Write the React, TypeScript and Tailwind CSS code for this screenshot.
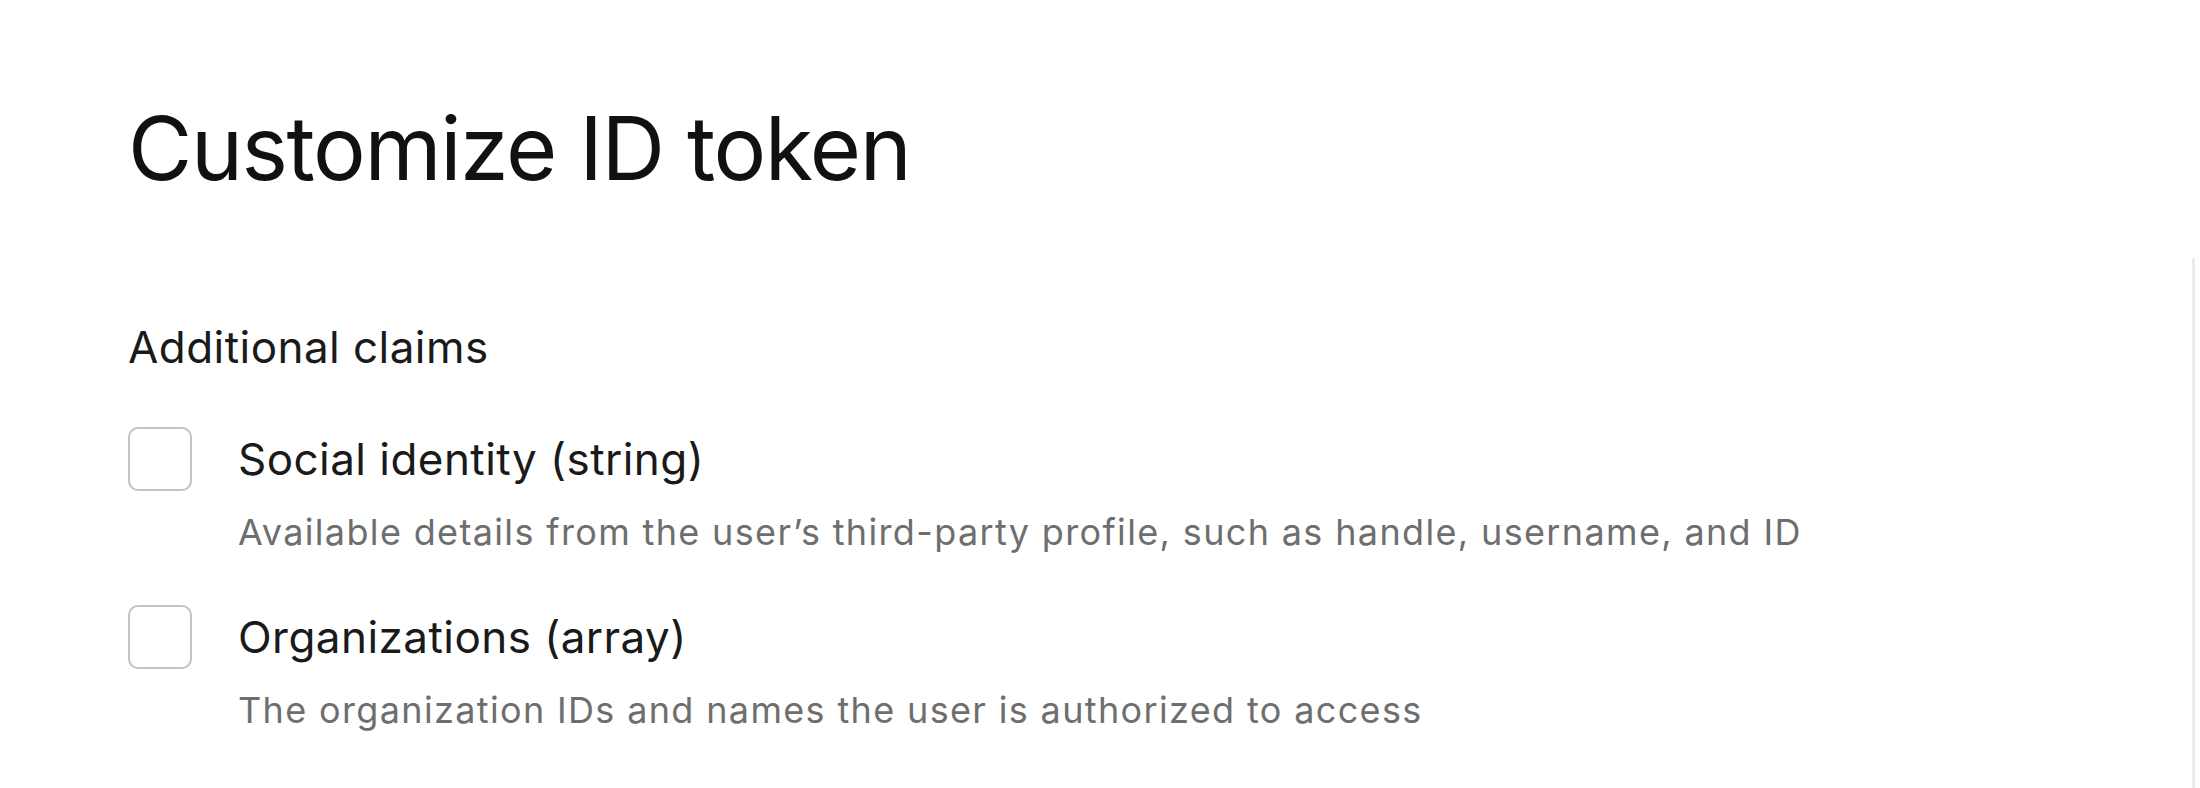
export default function App() {
  const claims = [
    {
      label: "Social identity (string)",
      desc: "Available details from the user’s third-party profile, such as handle, username, and ID",
    },
    {
      label: "Organizations (array)",
      desc: "The organization IDs and names the user is authorized to access",
    },
  ];

  return (
    <div className="flex min-h-[788px] w-[2200px] bg-white font-['Inter','Noto_Sans',sans-serif]">
      <div className="flex-1 pl-[128px] pt-[104px]">
        <h1 className="text-[88px] leading-none font-normal text-[#111111] tracking-[-1.4px]">
          Customize ID token
        </h1>

        <h2 className="mt-[133px] text-[44px] leading-none text-[#1a1a1a] tracking-[0.45px]">
          Additional claims
        </h2>

        <div className="mt-[58px] flex flex-col gap-[55px]">
          {claims.map((c) => (
            <label key={c.label} className="flex items-start gap-[46px]">
              <input type="checkbox" className="sr-only" />
              <span className="h-[64px] w-[64px] shrink-0 rounded-[10px] border-2 border-[#c2c2c2] bg-white" />
              <span className="flex flex-col pt-[10px]">
                <span className="text-[44px] leading-none text-[#1a1a1a] tracking-[0.45px]">{c.label}</span>
                <span className="mt-[33px] text-[36px] leading-none text-[#6e6e6e] tracking-[1.35px]">
                  {c.desc}
                </span>
              </span>
            </label>
          ))}
        </div>
      </div>

      {/* edge of side panel */}
      <div className="mt-[258px] w-[8px] border-l-[3px] border-[#ececec]" />
    </div>
  );
}
